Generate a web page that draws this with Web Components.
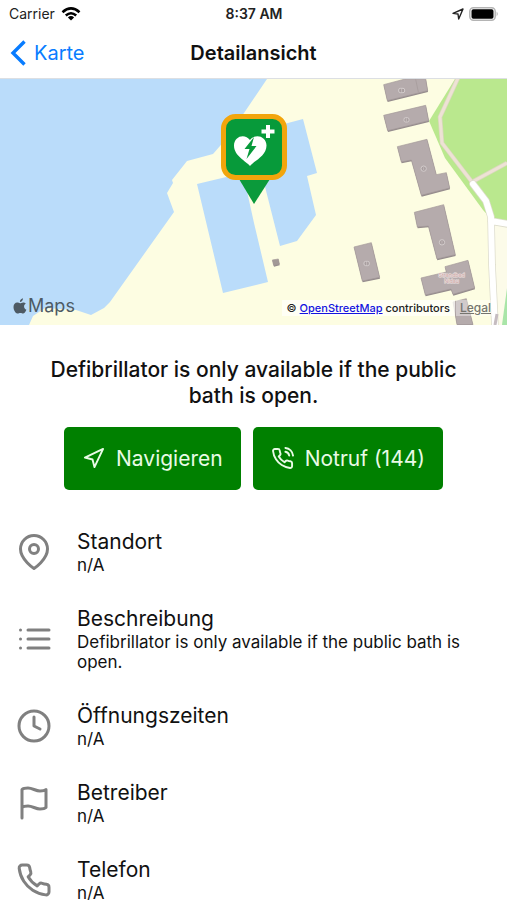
<!DOCTYPE html>
<html lang="de">
<head>
<meta charset="utf-8">
<meta name="viewport" content="width=device-width, initial-scale=1">
<title>Detailansicht</title>
<style>
  body { margin: 0; background: #fff; color: #111; font-family: Inter, "Liberation Sans", sans-serif; overflow-x: hidden; }
</style>
</head>
<body>
<defi-detail-page></defi-detail-page>
<script>
function define(name, html) {
  const template = document.createElement("template");
  template.innerHTML = html;
  customElements.define(name, class extends HTMLElement {
    constructor() {
      super();
      this.attachShadow({ mode: "open" }).append(template.content.cloneNode(true));
    }
  });
}

const ICONS = {
  navigate: '<path d="M3 11 22 2 13 21 11 13Z"/>',
  call: '<path d="M15.05 5A5 5 0 0 1 19 8.95M15.05 1A9 9 0 0 1 23 8.94m-1 7.98v3a2 2 0 0 1-2.18 2 19.79 19.79 0 0 1-8.63-3.07 19.5 19.5 0 0 1-6-6 19.79 19.79 0 0 1-3.07-8.67A2 2 0 0 1 4.11 2h3a2 2 0 0 1 2 1.72 12.84 12.84 0 0 0 .7 2.81 2 2 0 0 1-.45 2.11L8.09 9.91a16 16 0 0 0 6 6l1.27-1.27a2 2 0 0 1 2.11-.45 12.84 12.84 0 0 0 2.81.7A2 2 0 0 1 22 16.92z"/>',
  pin: '<path d="M21 10c0 7-9 13-9 13s-9-6-9-13a9 9 0 0 1 18 0z"/><circle cx="12" cy="10" r="3"/>',
  list: '<path d="M8 6h14M8 12h14M8 18h14M3 6h.01M3 12h.01M3 18h.01"/>',
  clock: '<circle cx="12" cy="12" r="10"/><path d="M12 6v6l4 2"/>',
  flag: '<path d="M4 15s1-1 4-1 5 2 8 2 4-1 4-1V3s-1 1-4 1-5-2-8-2-4 1-4 1zM4 22v-7"/>',
  phone: '<path d="M22 16.92v3a2 2 0 0 1-2.18 2 19.79 19.79 0 0 1-8.63-3.07 19.5 19.5 0 0 1-6-6 19.79 19.79 0 0 1-3.07-8.67A2 2 0 0 1 4.11 2h3a2 2 0 0 1 2 1.72 12.84 12.84 0 0 0 .7 2.81 2 2 0 0 1-.45 2.11L8.09 9.91a16 16 0 0 0 6 6l1.27-1.27a2 2 0 0 1 2.11-.45 12.84 12.84 0 0 0 2.81.7A2 2 0 0 1 22 16.92z"/>'
};

customElements.define("line-icon", class extends HTMLElement {
  constructor() {
    super();
    this.attachShadow({ mode: "open" });
  }
  connectedCallback() {
    this.shadowRoot.innerHTML = `<style>
      :host { display: block; flex: none; width: var(--icon-size, 24px); height: var(--icon-size, 24px); }
      svg { display: block; width: 100%; height: 100%; fill: none; stroke: currentColor; stroke-width: var(--icon-stroke, 2); stroke-linecap: round; stroke-linejoin: round; }
    </style><svg viewBox="0 0 24 24" aria-hidden="true">${ICONS[this.getAttribute("name")] || ""}</svg>`;
  }
});

define("status-bar", `<style>
  :host { display: grid; grid-template-columns: 1fr auto 1fr; align-items: center; height: 28px; padding: 0 8px 0 9px; font-size: 14px; line-height: 20px; color: #222; }
  div { display: flex; align-items: center; gap: 6px; }
  .time { font-weight: 600; }
  .right { justify-content: flex-end; gap: 5px; }
  svg { display: block; }
</style>
<div><span>Carrier</span>
  <svg width="20" height="14" viewBox="0 0 20 14" fill="none" stroke="#000" stroke-width="2.6" aria-hidden="true">
    <path d="M1.5 5.2Q10-2.4 18.5 5.2"/><path d="M4.8 8.5Q10 4 15.2 8.5"/><path d="M10 13.5 6.9 10.4Q10 7.8 13.1 10.4Z" fill="#000" stroke="none"/>
  </svg></div>
<span class="time">8:37 AM</span>
<div class="right">
  <svg width="12" height="12" viewBox="0 0 12 12" fill="none" stroke="#222" stroke-width="1.4" stroke-linejoin="round" aria-hidden="true"><path d="M1 5.4 11 1 6.7 11 6 6Z"/></svg>
  <svg width="30" height="14" viewBox="0 0 30 14" aria-hidden="true"><rect x=".8" y=".8" width="25.4" height="12.4" rx="3.6" fill="#fff" stroke="#b4b4b4" stroke-width="1.5"/><rect x="2.5" y="2.3" width="22" height="9.4" rx="1.8"/><path d="M27.6 4.6Q30 7 27.6 9.4Z" fill="#b4b4b4"/></svg>
</div>`);

define("nav-bar", `<style>
  :host { display: grid; grid-template-columns: 1fr auto 1fr; align-items: center; height: 50px; padding: 0 10px; border-bottom: 1px solid #dcdfe3; }
  a { display: flex; align-items: center; gap: 8px; color: #087cff; text-decoration: none; font-size: 20px; line-height: 26px; }
  h1 { margin: 0; font-size: 20px; line-height: 26px; font-weight: 600; }
  svg { display: block; }
</style>
<a href="#karte"><svg width="16" height="26" viewBox="0 0 16 26" fill="none" stroke="currentColor" stroke-width="3.4" aria-hidden="true"><path d="M14.5 1.5 3 13 14.5 24.5"/></svg><slot name="back"></slot></a>
<h1><slot></slot></h1><span></span>`);

define("map-view", `<style>
  :host { display: block; position: relative; aspect-ratio: 507 / 246; overflow: hidden; background: #fdfce1; }
  .map { display: block; width: 100%; height: 100%; }
  .brand { position: absolute; left: 13px; bottom: 7px; display: flex; align-items: center; gap: 1px; color: #4d5a64; font-size: 18px; line-height: 24px; }
  .credit { position: absolute; right: 12px; bottom: 9px; display: flex; align-items: center; gap: 1px; font-size: 11px; line-height: 16px; font-weight: 500; color: #222; }
  .osm { background: #fffffbc0; padding: 0 5px; }
  .osm a { color: #1414e0; }
  .legal { color: #75756f; background: #ffffff60; padding: 0 4px; font-size: 12px; }
</style>
<svg class="map" viewBox="0 0 507 246" preserveAspectRatio="xMidYMid slice" role="img" aria-label="Karte mit Defibrillator">
  <rect width="507" height="246" fill="#fdfde2"/>
  <g fill="#badcfa">
    <path d="M0 0H267L244 34 220 67 213 75 187 82 172 101 173 104 167 114 174 133 110 223 104 229 91 236 76 231 45 229 33 237 29 246H0Z"/>
    <path d="M197 105 243 94 254 144 268 203 223 214Z"/>
    <path d="M258 52 303 40 317 94 307 97 316 136 297 162 280 167 258 80Z"/>
  </g>
  <path d="M455 0 429 42 445 79 483 131 493 142 507 144V0Z" fill="#bae88e"/>
  <path d="M494 142V246H507V142Z" fill="#fcfbe9"/>
  <path d="M507 209 502 246H507Z" fill="#a9e5a8"/>
  <g fill="none" stroke-linejoin="round">
    <path d="M458-1 440 38 442 64 472 103 507 84" stroke="#d9d8bd" stroke-width="4.5"/>
    <path d="M458-1 440 38 442 64 472 103 507 84" stroke="#eee2d5" stroke-width="3"/>
    <path d="M473 105 486 122 491 138 492 186 495 247M491 142 508 145" stroke="#dddccc" stroke-width="7.5" stroke-linecap="round"/>
    <path d="M473 105 486 122 491 138 492 186 495 247M491 142 508 145" stroke="#fff" stroke-width="6" stroke-linecap="round"/>
    <path d="M497 235 495 246" stroke="#c5bcc0" stroke-width="3"/>
  </g>
  <g transform="translate(253 -1) scale(.33333)">
    <g fill="#948b8c" transform="translate(1 4)">
      <path d="M392 20 460 2H518L524 38 403 68Z"/><path d="M392 112 518 82 527 128 404 158Z"/>
      <path d="M433 206 522 184 550 290 580 284 590 330 505 352 475 246 445 252Z"/>
      <path d="M484 403 572 380 607 530 552 543 526 444 493 447Z"/><path d="M303 507 355 494 380 598 328 609Z"/>
      <path d="M504 600 580 582 576 566 645 547 665 630 600 649 594 633 517 651Z"/>
      <path d="M600 672 640 662 660 740H612Z"/><path d="M58 546 76 543 79 558 62 562Z"/>
    </g>
    <g fill="#b5abac" stroke="#a39999" stroke-width="2">
      <path d="M392 20 460 2H518L524 38 403 68Z"/><path d="M392 112 518 82 527 128 404 158Z"/>
      <path d="M433 206 522 184 550 290 580 284 590 330 505 352 475 246 445 252Z"/>
      <path d="M484 403 572 380 607 530 552 543 526 444 493 447Z"/><path d="M303 507 355 494 380 598 328 609Z"/>
      <path d="M504 600 580 582 576 566 645 547 665 630 600 649 594 633 517 651Z"/>
      <path d="M600 672 640 662 660 740H612Z"/><path d="M58 546 76 543 79 558 62 562Z" fill="#a29997"/>
    </g>
    <path d="M488 4 496 42" stroke="#a39999" stroke-width="2"/>
    <g fill="#a79d9e" stroke="#d3cccc" stroke-width="3">
      <rect x="437" y="31" width="18" height="13" rx="5"/><rect x="453" y="119" width="15" height="13" rx="5"/><circle cx="512" cy="272" r="8"/><circle cx="567" cy="493" r="8"/><rect x="333" y="550" width="16" height="13" rx="5"/>
    </g>
    <g fill="none" stroke="#d3cccc" stroke-width="2"><path d="M446 33v9M460 121v9M512 268v8M567 489v8M341 552v9"/></g>
    <g fill="#c9a3a3" stroke="#efe4e2" stroke-width="3" paint-order="stroke" font-family="Inter, sans-serif" font-size="16" text-anchor="middle"><text x="596" y="596">Strandbad</text><text x="596" y="616">Nidau</text></g>
  </g>
  <g>
    <path d="M239 100H270L254 125Z" fill="#0b9a3b"/>
    <rect x="223.500" y="37.500" width="61" height="61" rx="12" fill="#079a3a" stroke="#f2a50c" stroke-width="5"/>
    <path d="M250 87C246 82 234 77 234 66.500 234 57 245 54 250 61 255 54 266.500 57 266.500 66.500 266.500 77 254 82 250 87Z" fill="#fff"/>
    <path d="M254 58 244.500 70H249.500L246.500 80 256.500 67H251.500Z" fill="#079a3a"/>
    <path d="M268 46V59M261.500 52.500H274.500" stroke="#fff" stroke-width="4"/>
  </g>
</svg>
<div class="brand"><svg width="14" height="16" viewBox="0 0 14 16" fill="currentColor" aria-hidden="true"><path d="M10 .2C10 2.300 8.500 3.900 6.900 3.900 6.800 2 8.400.400 10 .200ZM12.900 5.600C11.400 6.600 11 7.600 11.100 8.800 11.200 10.200 12 11.200 13.400 11.800 12.500 14 11.300 15.600 10.100 15.600 9.100 15.600 8.700 15 7.400 15 6.200 15 5.700 15.600 4.800 15.600 2.700 15.600.500 12.300.500 9 .500 6.100 2.300 4.500 4.100 4.500 5.300 4.500 6.300 5.200 7 5.200 7.800 5.200 8.800 4.400 10.200 4.400 11.200 4.400 12.200 4.700 12.900 5.600Z"/></svg><span>Maps</span></div>
<div class="credit"><span class="osm">© <a href="#osm">OpenStreetMap</a> contributors</span><a class="legal" href="#legal">Legal</a></div>`);

define("action-button", `<style>
  :host { display: block; --icon-size: 23px; --icon-stroke: 2; }
  button { display: flex; align-items: center; justify-content: center; gap: 11px; height: 63px; margin: 0; padding: 0 18px; border: 0; border-radius: 5px; background: #008000; color: #e9fbe6; font: inherit; font-size: 21px; line-height: 26px; white-space: nowrap; }
</style>
<button type="button"><slot name="icon"></slot><span><slot></slot></span></button>`);

define("info-row", `<style>
  :host { display: grid; grid-template-columns: 36px 1fr; column-gap: 25px; align-items: center; --icon-size: 36px; --icon-stroke: 2; }
  .icon { color: #808080; }
  h3 { margin: 0; font-size: 21px; line-height: 26px; font-weight: 400; }
  p { margin: 0; font-size: 17px; line-height: 20px; }
</style>
<div class="icon"><slot name="icon"></slot></div>
<div><h3><slot name="title"></slot></h3><p><slot></slot></p></div>`);

define("defi-detail-page", `<style>
  :host { display: block; }
  h2 { margin: 32px 40px 18px; font-size: 21px; line-height: 26px; font-weight: 500; text-align: center; }
  .actions { display: flex; flex-wrap: wrap; justify-content: center; gap: 12px; }
  .rows { display: grid; gap: 31px; padding: 39px 40px 31px 16px; }
</style>
<header><status-bar></status-bar><nav-bar><span slot="back">Karte</span>Detailansicht</nav-bar></header>
<main>
  <map-view></map-view>
  <h2>Defibrillator is only available if the public bath is open.</h2>
  <div class="actions">
    <action-button><line-icon slot="icon" name="navigate"></line-icon>Navigieren</action-button>
    <action-button><line-icon slot="icon" name="call"></line-icon>Notruf (144)</action-button>
  </div>
  <section class="rows">
    <info-row><line-icon slot="icon" name="pin"></line-icon><span slot="title">Standort</span>n/A</info-row>
    <info-row><line-icon slot="icon" name="list"></line-icon><span slot="title">Beschreibung</span>Defibrillator is only available if the public bath is open.</info-row>
    <info-row><line-icon slot="icon" name="clock"></line-icon><span slot="title">Öffnungszeiten</span>n/A</info-row>
    <info-row><line-icon slot="icon" name="flag"></line-icon><span slot="title">Betreiber</span>n/A</info-row>
    <info-row><line-icon slot="icon" name="phone"></line-icon><span slot="title">Telefon</span>n/A</info-row>
  </section>
</main>`);
</script>
</body>
</html>
